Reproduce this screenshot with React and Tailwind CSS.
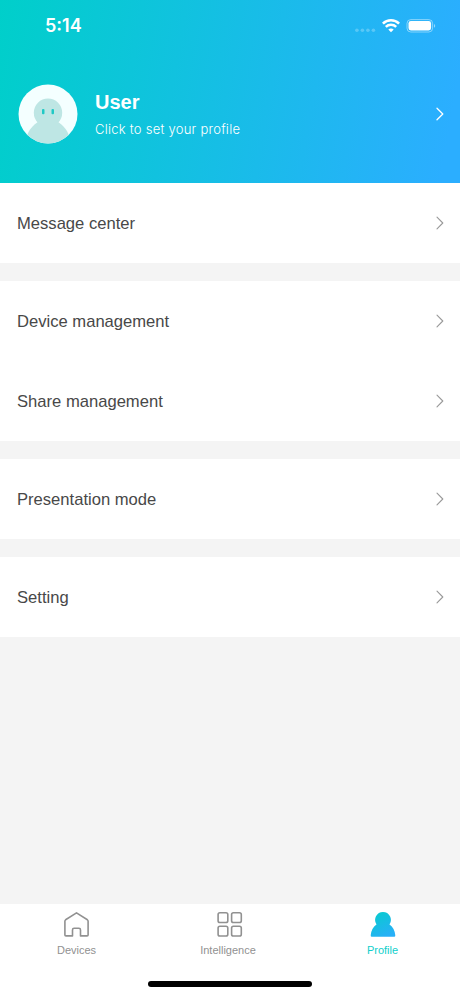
import React from "react";

const groups = [
  ["Message center"],
  ["Device management", "Share management"],
  ["Presentation mode"],
  ["Setting"],
];

const Chevron = ({ className }) => (
  <svg
    viewBox="0 0 8 14"
    className={`w-2 h-3.5 shrink-0 ${className}`}
    fill="none"
    stroke="currentColor"
  >
    <path d="M1 1.2 L6.8 7 L1 12.8" strokeLinecap="round" strokeLinejoin="round" />
  </svg>
);

const StatusBar = () => (
  <div className="flex items-center justify-between h-[51px] pl-[45px] pr-6 text-white">
    <span className="font-['Inter',sans-serif] text-[18px] leading-6 font-semibold">
      5:14
    </span>
    <div className="flex items-center">
      <svg viewBox="0 0 21 14" className="w-[21px] h-3.5 mr-1.5" fill="white" fillOpacity="0.25">
        <circle cx="1.9" cy="11.3" r="1.8" />
        <circle cx="7.4" cy="11.3" r="1.8" />
        <circle cx="12.9" cy="11.3" r="1.8" />
        <circle cx="18.4" cy="11.3" r="1.8" />
      </svg>
      <svg viewBox="0 0 18 14" className="w-[18px] h-3.5" fill="none" stroke="white">
        <path d="M0.9 4.6 C5.4 0.2 12.6 0.2 17.1 4.6" strokeWidth="2.6" />
        <path d="M3.8 7.9 C6.7 5.1 11.3 5.1 14.2 7.9" strokeWidth="2.5" />
        <path d="M9 13.3 L6.3 10.6 C7.8 9 10.2 9 11.7 10.6 Z" fill="white" stroke="none" />
      </svg>
      <svg viewBox="0 0 30 14" className="w-[30px] h-3.5 ml-1.5">
        <rect x="1" y="0.6" width="25.6" height="12.4" rx="3.8" fill="none" stroke="white" strokeOpacity="0.45" />
        <rect x="2.5" y="2.1" width="22.6" height="9.4" rx="2.4" fill="white" />
        <path d="M28 4.9 C29.6 5.5 29.6 8.1 28 8.7 Z" fill="white" fillOpacity="0.5" />
      </svg>
    </div>
  </div>
);

const Avatar = () => (
  <svg viewBox="0 0 60 60" className="w-[60px] h-[60px] shrink-0">
    <clipPath id="avatarClip">
      <circle cx="30" cy="30" r="29.5" />
    </clipPath>
    <circle cx="30" cy="30" r="29.5" fill="#f4ffff" />
    <g clipPath="url(#avatarClip)" fill="#bee6e4">
      <circle cx="30" cy="28.8" r="14.2" />
      <path d="M9 52 C10.5 46 15 41.5 20.5 37.5 L39.5 37.5 C45 41.5 49.5 46 51 52 L51 60 L9 60 Z" />
    </g>
    <rect x="24" y="25" width="2.5" height="5.2" rx="0.9" fill="#20c9c5" />
    <rect x="33.5" y="25" width="2.5" height="5.2" rx="0.9" fill="#20c9c5" />
  </svg>
);

const HomeIcon = () => (
  <svg viewBox="0 0 28 28" className="w-7 h-7" fill="none" stroke="#919191" strokeWidth="1.6">
    <path
      d="M13.5 1.9 L2.6 8.8 Q1.9 9.3 1.9 10.2 V23.9 Q1.9 24.9 2.9 24.9 H9.5 V18.9 Q9.5 17.3 11.1 17.3 H15.9 Q17.5 17.3 17.5 18.9 V24.9 H24.1 Q25.1 24.9 25.1 23.9 V10.2 Q25.1 9.3 24.4 8.8 Z"
      strokeLinejoin="round"
    />
  </svg>
);

const GridIcon = () => (
  <svg viewBox="0 0 28 28" className="w-7 h-7" fill="none" stroke="#919191" strokeWidth="1.6">
    <rect x="2.1" y="1.8" width="9.7" height="9.7" rx="1.8" />
    <rect x="15.6" y="1.8" width="9.7" height="9.7" rx="1.8" />
    <rect x="2.1" y="15.3" width="9.7" height="9.7" rx="1.8" />
    <rect x="15.6" y="15.3" width="9.7" height="9.7" rx="1.8" />
  </svg>
);

const ProfileIcon = () => (
  <svg viewBox="0 0 28 28" className="w-7 h-7">
    <defs>
      <linearGradient id="profileFill" x1="0.2" y1="0" x2="0.7" y2="1">
        <stop offset="0" stopColor="#08cbcf" />
        <stop offset="1" stopColor="#28aff8" />
      </linearGradient>
    </defs>
    <path
      d="M14 1.1 A7.9 7.9 0 0 1 20.5 13.5 C23.9 15.9 25.9 19.8 26.3 24.3 Q26.4 25.8 25.2 25.8 H2.8 Q1.6 25.8 1.7 24.3 C2.1 19.8 4.1 15.9 7.5 13.5 A7.9 7.9 0 0 1 14 1.1 Z"
      fill="url(#profileFill)"
    />
  </svg>
);

const tabs = [
  { label: "Devices", icon: HomeIcon, labelClass: "text-[#919191]" },
  { label: "Intelligence", icon: GridIcon, labelClass: "text-[#919191] mr-[3px]" },
  { label: "Profile", icon: ProfileIcon, labelClass: "text-[#10cfcb]" },
];

const App = () => {
  return (
    <div className="flex flex-col w-full h-screen overflow-hidden bg-[#f4f4f4] font-['Liberation_Sans',sans-serif]">
      <header className="h-[183px] shrink-0 bg-[linear-gradient(100deg,#00cfca_0%,#2baeff_96%)]">
        <StatusBar />
        <div className="flex items-center mt-[33px] pl-[17.5px] pr-4 text-white">
          <Avatar />
          <div className="flex-1 ml-[17.5px] pb-0.5">
            <h1 className="text-[20px] leading-7 font-bold">User</h1>
            <p className="font-['Inter',sans-serif] text-[13px] leading-5 mt-[3px] font-light tracking-[0.25px]">
              Click to set your profile
            </p>
          </div>
          <Chevron className="stroke-[1.3]" />
        </div>
      </header>

      <main className="flex flex-col flex-1 gap-[18px]">
        {groups.map((rows) => (
          <section key={rows[0]} className="bg-white">
            {rows.map((row) => (
              <div key={row} className="flex items-center justify-between h-20 pl-[17px] pr-4">
                <span className="text-[16.6px] pt-0.5 text-[#484848]">{row}</span>
                <Chevron className="text-[#999999] stroke-[1.1]" />
              </div>
            ))}
          </section>
        ))}
      </main>

      <nav className="flex flex-col h-[92px] shrink-0 bg-white">
        <div className="flex justify-between pt-[7px] pl-[46px] pr-[47px]">
          {tabs.map(({ label, icon: Icon, labelClass }) => (
            <div key={label} className="flex flex-col items-center w-[61px]">
              <Icon />
              <span className={`text-[11px] leading-4 mt-[3px] ${labelClass}`}>
                {label}
              </span>
            </div>
          ))}
        </div>
        <div className="w-[164px] h-[5.5px] mt-auto mb-[9.5px] mx-auto rounded-full bg-black" />
      </nav>
    </div>
  );
};

export default App;
